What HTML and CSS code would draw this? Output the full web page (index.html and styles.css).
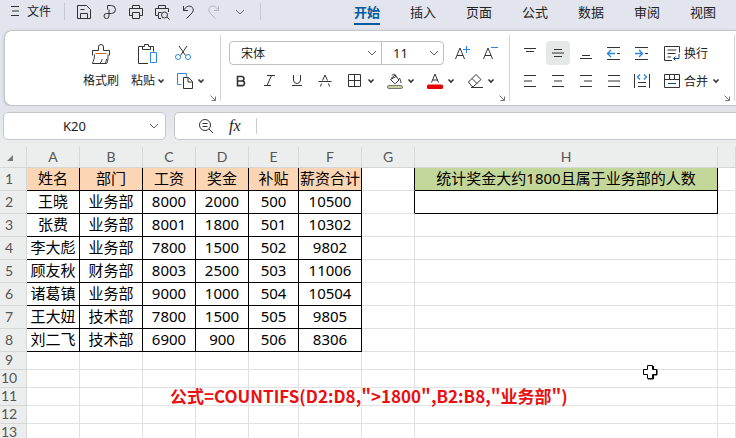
FILE: index.html
```
<!doctype html>
<html lang="zh-CN">
<head>
  <meta charset="utf-8">
  <title>COUNTIFS</title>
  <link rel="stylesheet" href="styles.css">
</head>
<body>
  <!-- Shared icons -->
  <svg class="defs" width="0" height="0">
    <symbol id="caret" viewBox="0 0 8 8"><path d="M1.5 2.5 4 5l2.500-2.500" stroke-width="1.600"/></symbol>
    <symbol id="chevron" viewBox="0 0 10 8"><path d="M1 2l4 4 4-4"/></symbol>
    <symbol id="corner" viewBox="0 0 6 6"><path d="M.5.5l5 5M5.500 1.500v4h-4"/></symbol>
  </svg>

  <header class="topbar">
    <button class="file"><svg width="8" height="12" viewBox="0 0 8 12"><path d="M0 1.500h8M1 6h7M0 10.500h8"/></svg>文件</button>
    <div class="quick">
      <button aria-label="保存"><svg viewBox="0 0 16 16"><path d="M1.500 1.500h9l4 4v9h-13zM4.500 14.500V9.500h7v5M4.500 5.500h4"/></svg></button>
      <button aria-label="输出"><svg viewBox="0 0 16 16"><path d="M5.500 5.500v-4h4a4 4 0 0 1 0 8h-5a2.500 2.500 0 1 0 2.500 2.500V5.500"/></svg></button>
      <button aria-label="打印"><svg viewBox="0 0 16 16"><path d="M4.500 4.500v-3h7v3M4.500 11.500h-3v-7h13v7h-3M4.500 8.500h7v6h-7z"/></svg></button>
      <button aria-label="预览"><svg viewBox="0 0 16 16"><path d="M4.500 4.500v-3h7v3M7 14.500H4.500v-3h-3v-7h13V8M4.500 11V8.500h3"/><circle cx="10.500" cy="11" r="3"/><path d="M13 13l2.500 2.500"/></svg></button>
      <button aria-label="撤销"><svg viewBox="0 0 16 16"><path d="M3.500 2v4.500H8M3.500 6.500C6 2.500 8.500 1.500 11 2.500s3 4 1 6.500l-5.500 5.500"/></svg></button>
      <button aria-label="恢复" disabled><svg viewBox="0 0 16 16"><path d="M12.500 2v4.500H8M12.500 6.500C10 2.500 7.500 1.500 5 2.500s-3 4-1 6.500l5.500 5.500"/></svg></button>
      <button aria-label="更多"><svg class="chev"><use href="#chevron"/></svg></button>
    </div>
    <nav class="tabs">
      <a href="#" class="active">开始</a>
      <a href="#">插入</a>
      <a href="#">页面</a>
      <a href="#">公式</a>
      <a href="#">数据</a>
      <a href="#">审阅</a>
      <a href="#">视图</a>
    </nav>
  </header>

  <section class="ribbon">
    <div class="group clipboard">
      <button class="big"><svg viewBox="0 0 20 20"><path d="M1.500 11.500v-5h6V3a2.500 2.500 0 0 1 5 0v3.500h6v5M3.500 10.500c0 4-1 6-2 9h14c1.500-2 1.500-5 1.500-9M9 19c1.500-1 2-2.500 2-4M14 19c1-1 1.500-2.500 1.500-4"/><path class="orange" d="M4.500 9.500h11"/></svg><span>格式刷</span></button>
      <button class="big"><svg viewBox="0 0 20 20"><path d="M10 19.500H.5v-17h4M12.500 2.500h3v5M4.500 5.500v-3h2v-2h4v2h2v3z"/><path class="blue" d="M12.500 8.500h6v10h-6z"/></svg><span>粘贴<svg class="caret"><use href="#caret"/></svg></span></button>
      <div class="stack">
        <button aria-label="剪切"><svg viewBox="0 0 16 16"><path d="M4 1l6.500 9.500M12 1 5.500 10.500"/><circle class="blue" cx="3" cy="12" r="2.500"/><circle class="blue" cx="13" cy="12" r="2.500"/></svg></button>
        <button class="copy" aria-label="复制"><svg viewBox="0 0 16 16"><path class="blue" d="M4.500 11.500h-4v-11h9v3"/><path d="M6.500 4.500h5l4 4v7h-9zM11 5v4h4"/></svg><svg class="caret"><use href="#caret"/></svg></button>
      </div>
      <button class="launcher" aria-label="剪贴板"><svg><use href="#corner"/></svg></button>
    </div>

    <div class="group font">
      <div class="row">
        <div class="combo">
          <label class="face"><select aria-label="字体"><option>宋体</option></select><svg class="chev"><use href="#chevron"/></svg></label>
          <label class="size"><select aria-label="字号"><option>11</option></select><svg class="chev"><use href="#chevron"/></svg></label>
        </div>
        <button aria-label="增大字号"><svg viewBox="0 0 16 16"><path d="M1.500 14 6 3l4.500 11M3 10.500h6"/><path class="blue" d="M9 4.500h7M12.500 1v7"/></svg></button>
        <button aria-label="减小字号"><svg viewBox="0 0 16 16"><path d="M1.500 14 6 3l4.500 11M3 10.500h6"/><path class="blue" d="M9 2.500h7"/></svg></button>
      </div>
      <div class="row tools">
        <button aria-label="加粗"><svg viewBox="0 0 16 16"><path stroke-width="1.600" d="M4.500 3.500h4.200a2.200 2.200 0 0 1 0 4.500H4.500zM4.500 8h4.700a2.300 2.300 0 0 1 0 4.600H4.500z"/></svg></button>
        <button aria-label="倾斜"><svg viewBox="0 0 16 16"><path d="M6 2.500h8M3 12.500h7M10.500 2.500l-4.500 10"/></svg></button>
        <button aria-label="下划线"><svg viewBox="0 0 16 16"><path d="M4.500 2v5a3.500 3.500 0 0 0 7 0V2M3 12.500h10"/></svg></button>
        <button aria-label="删除线"><svg viewBox="0 0 16 16"><path d="M5.500 7.500 8 2l2.500 5.500M1.500 8.500h13M4.500 10.500l-1 3M11.500 10.500l1 3"/></svg></button>
        <button class="wide" aria-label="边框"><svg viewBox="0 0 16 16"><path d="M1.500 1.500h12v12h-12zM7.500 1.500v12M1.500 7.500h12"/></svg><svg class="caret"><use href="#caret"/></svg></button>
        <button class="wide" aria-label="填充颜色"><svg viewBox="0 0 16 16"><path d="M5 2.500c1-2 4-1.500 4 1L3.500 6.500l4 4h1L12 7 8 2 4 5.500M12.500 5c.5 1.500 1.500 3 1.500 5"/><rect x=".5" y="12.500" width="15" height="3" rx="1.500" fill="#c5d69b" stroke="#777"/></svg><svg class="caret"><use href="#caret"/></svg></button>
        <button class="wide" aria-label="字体颜色"><svg viewBox="0 0 16 16"><path d="M4.500 9.500 8 1l3.500 8.500M5.500 7h5"/><rect y="11.500" width="16" height="4.500" rx="1.500" fill="#e80000" stroke="none"/></svg><svg class="caret"><use href="#caret"/></svg></button>
        <button class="wide" aria-label="清除"><svg viewBox="0 0 16 16"><path d="M1.500 9 9 1.500 14 6.500 6.500 13.500H5zM5 5.500l5 5M4 14.500h12"/></svg><svg class="caret"><use href="#caret"/></svg></button>
      </div>
      <button class="launcher" aria-label="字体设置"><svg><use href="#corner"/></svg></button>
    </div>

    <div class="group align">
      <div class="row">
        <button aria-label="顶端对齐"><svg viewBox="0 0 16 16"><path d="M2 3.500h12M4 6.500h8"/></svg></button>
        <button class="on" aria-label="垂直居中"><svg viewBox="0 0 16 16"><path d="M4 4.500h8M2 8h12M4 11.500h8"/></svg></button>
        <button aria-label="底端对齐"><svg viewBox="0 0 16 16"><path d="M4 10.500h8M2 13.500h12"/></svg></button>
        <button aria-label="减少缩进"><svg viewBox="0 0 16 16"><path d="M1 2.500h13M11 8.500h3M1 14.500h13"/><path class="blue" stroke-width="1.400" d="M9 8.500H2M5 5 1.500 8.500 5 12"/></svg></button>
        <button aria-label="增加缩进"><svg viewBox="0 0 16 16"><path d="M1 2.500h13M11 8.500h3M1 14.500h13"/><path class="blue" stroke-width="1.400" d="M1 8.500h7M5 5l3.500 3.500L5 12"/></svg></button>
        <button class="text"><svg viewBox="0 0 16 16"><path d="M8 15.500H.5V1.500h15v6M3.500 5h9M3.500 8.500h8M3.500 12H7"/><path class="navy" d="M15 9v4.500H9.500M11.500 11.500l-2 2 2 2"/></svg>换行</button>
      </div>
      <div class="row">
        <button aria-label="左对齐"><svg viewBox="0 0 16 16"><path d="M2 2.500h12M2 8h8M2 13.500h12"/></svg></button>
        <button aria-label="水平居中"><svg viewBox="0 0 16 16"><path d="M2 2.500h12M4 8h8M2 13.500h12"/></svg></button>
        <button aria-label="右对齐"><svg viewBox="0 0 16 16"><path d="M2 2.500h12M6 8h8M2 13.500h12"/></svg></button>
        <button aria-label="两端对齐"><svg viewBox="0 0 16 16"><path d="M2 2.500h12M2 8h12M2 13.500h12"/></svg></button>
        <button aria-label="分散对齐"><svg viewBox="0 0 16 16"><path d="M.5 1v14M15.500 1v14M4 9.500h8M4 13.500h8"/><path class="blue" stroke-width="1.400" d="M6 1.500 3.500 4 6 6.500M10 1.500 12.500 4 10 6.500"/></svg></button>
        <button class="text"><svg viewBox="0 0 16 16"><path d="M.5 1.500h15v13H.5zM.5 6.500h15M5.500 1.500v5M10.500 1.500v5"/><path class="navy" d="M4 10.500h8"/></svg>合并<svg class="caret"><use href="#caret"/></svg></button>
      </div>
      <button class="launcher" aria-label="对齐设置"><svg><use href="#corner"/></svg></button>
    </div>
  </section>

  <div class="formula-bar">
    <label class="name-box"><input type="text" value="K20" aria-label="名称框"><svg class="chev"><use href="#chevron"/></svg></label>
    <div class="formula">
      <svg width="16" height="16" viewBox="0 0 16 16"><circle cx="7" cy="7" r="5.500"/><path d="M4.500 5.500h5M4.500 8.500h5M11 11l4 4"/></svg>
      <span class="fx">fx</span>
      <input type="text" aria-label="编辑栏">
    </div>
  </div>

  <main class="sheet">
    <table>
      <colgroup>
        <col class="c-num"><col class="c-m"><col class="c-l"><col class="c-m"><col class="c-m"><col class="c-s"><col class="c-l"><col class="c-m"><col class="c-xl"><col>
      </colgroup>
      <thead>
        <tr><th class="all"><svg width="8" height="8" viewBox="0 0 8 8"><path d="M7 1v6H1z"/></svg></th><th>A</th><th>B</th><th>C</th><th>D</th><th>E</th><th>F</th><th>G</th><th>H</th><th></th></tr>
      </thead>
      <tbody class="data">
        <tr class="head"><th>1</th><td>姓名</td><td>部门</td><td>工资</td><td>奖金</td><td>补贴</td><td>薪资合计</td><td class="edge"></td><td class="ask">统计奖金大约1800且属于业务部的人数</td><td class="none"></td></tr>
        <tr><th>2</th><td>王晓</td><td>业务部</td><td>8000</td><td>2000</td><td>500</td><td>10500</td><td class="edge"></td><td></td><td class="none"></td></tr>
        <tr><th>3</th><td>张费</td><td>业务部</td><td>8001</td><td>1800</td><td>501</td><td>10302</td><td class="none"></td><td class="none"></td><td class="none"></td></tr>
        <tr><th>4</th><td>李大彪</td><td>业务部</td><td>7800</td><td>1500</td><td>502</td><td>9802</td><td class="none"></td><td class="none"></td><td class="none"></td></tr>
        <tr><th>5</th><td>顾友秋</td><td>财务部</td><td>8003</td><td>2500</td><td>503</td><td>11006</td><td class="none"></td><td class="none"></td><td class="none"></td></tr>
        <tr><th>6</th><td>诸葛镇</td><td>业务部</td><td>9000</td><td>1000</td><td>504</td><td>10504</td><td class="none"></td><td class="none"></td><td class="none"></td></tr>
        <tr><th>7</th><td>王大妞</td><td>技术部</td><td>7800</td><td>1500</td><td>505</td><td>9805</td><td class="none"></td><td class="none"></td><td class="none"></td></tr>
        <tr><th>8</th><td>刘二飞</td><td>技术部</td><td>6900</td><td>900</td><td>506</td><td>8306</td><td class="none"></td><td class="none"></td><td class="none"></td></tr>
      </tbody>
      <tbody>
        <tr><th>9</th><td></td><td></td><td></td><td></td><td></td><td></td><td></td><td></td><td></td></tr>
        <tr><th>10</th><td></td><td></td><td></td><td></td><td></td><td></td><td></td><td></td><td></td></tr>
        <tr><th>11</th><td></td><td></td><td></td><td></td><td></td><td></td><td></td><td></td><td></td></tr>
        <tr><th>12</th><td></td><td></td><td></td><td></td><td></td><td></td><td></td><td></td><td></td></tr>
        <tr><th>13</th><td></td><td></td><td></td><td></td><td></td><td></td><td></td><td></td><td></td></tr>
      </tbody>
    </table>
    <p class="note">公式=COUNTIFS(D2:D8,"&gt;1800",B2:B8,"业务部")</p>
    <svg class="pointer" width="16" height="16" viewBox="0 0 16 16"><path d="M5.500 1.500h5v4h4v5h-4v4h-5v-4h-4v-5h4z"/><path class="shade" d="M11.500 2v3.500M15 5.500v5.500h-3.500v4H6"/></svg>
  </main>
</body>
</html>
```

FILE: styles.css
```
* {
  box-sizing: border-box;
  margin: 0;
  padding: 0;
}

body {
  display: flex;
  flex-direction: column;
  height: 100vh;
  overflow: hidden;
  font-family: "Noto Sans", "Noto Sans CJK SC", sans-serif;
  font-size: 12px;
  color: #222;
  background: #e2e5ed;
}

svg {
  flex: none;
  fill: none;
  stroke: #333;
}

.blue { stroke: #2b87dc }
.navy { stroke: #0b4a86 }
.orange { stroke: #c46a10 }

.defs { position: absolute }

button {
  display: flex;
  align-items: center;
  justify-content: center;
  font: inherit;
  color: inherit;
  background: none;
  border: 0;
}

button svg {
  width: 16px;
  height: 16px;
}

input,
select {
  font: inherit;
  color: inherit;
  background: none;
  border: 0;
  outline: none;
  appearance: none;
}

button .caret,
.caret {
  width: 8px;
  height: 8px;
}

button .chev,
.chev {
  width: 10px;
  height: 8px;
  stroke: #666;
}

/* Top bar */
.topbar {
  display: flex;
  flex: none;
  height: 30px;
}

.file {
  gap: 8px;
  width: 64px;
  height: 22px;
  padding-right: 2px;
}

.file svg {
  width: 8px;
  height: 12px;
}

.quick {
  display: flex;
  width: 197px;
  height: 17px;
  margin-top: 3px;
  padding-left: 6px;
  border: solid #c6c9d0;
  border-width: 0 1px;
}

.quick button { width: 26px }
.quick button:disabled svg { stroke: #b5b8be }

.tabs {
  display: flex;
  margin-left: 78px;
}

.tabs a {
  display: flex;
  justify-content: center;
  width: 56px;
  font-size: 13px;
  line-height: 24px;
  color: #222;
  text-decoration: none;
}

.tabs .active {
  height: 25px;
  width: 26px;
  margin: 0 15px;
  font-weight: 700;
  color: #005a9e;
  border-bottom: 2px solid #005a9e;
}

/* Ribbon */
.ribbon {
  display: flex;
  flex: none;
  height: 76px;
  margin-left: 4px;
  padding: 4px 0;
  background: #fff;
  border: 1px solid #c2c6cb;
  border-right: 0;
  border-radius: 8px 0 0 8px;
  box-shadow: 0 1px 3px #b9bec6;
}

.group {
  position: relative;
  flex: none;
  padding: 6px 0 6px 8px;
  border-right: 1px solid #d5d5d5;
}

.clipboard {
  display: flex;
  width: 216px;
  padding-left: 74px;
}

.font { width: 289px }
.align { width: 225px }

.row {
  display: flex;
  height: 24px;
  margin-bottom: 4px;
}

.big {
  flex-direction: column;
  justify-content: flex-start;
  gap: 8px;
  width: 44px;
  padding-top: 3px;
  line-height: 18px;
}

.big + .big { width: 50px }

.big > svg {
  width: 20px;
  height: 20px;
}

.big span {
  display: flex;
  align-items: center;
  gap: 2px;
  white-space: nowrap;
}

.stack { padding-left: 2px }

.stack button {
  justify-content: flex-start;
  gap: 4px;
  height: 24px;
  margin-bottom: 4px;
}

.stack .copy { padding-left: 2px }

.launcher {
  position: absolute;
  right: 4px;
  bottom: 0;
}

.launcher svg {
  width: 6px;
  height: 6px;
  stroke: #777;
}

.combo {
  display: flex;
  flex: none;
  width: 215px;
  margin-right: 4px;
  font-size: 12px;
  border: 1px solid #bfbfbf;
  border-radius: 4px;
}

.combo label {
  display: flex;
  align-items: center;
  padding-right: 4px;
}

.combo select {
  flex: 1;
  min-width: 0;
  padding-left: 11px;
}

.face {
  flex: 1;
  border-right: 1px solid #bfbfbf;
}

.size {
  width: 61px;
  font-size: 13px;
}

.row button {
  flex: none;
  width: 28px;
}

.tools { margin-left: -2px }

.tools .wide {
  justify-content: flex-start;
  gap: 4px;
  width: 40px;
  padding-left: 8px;
}

.align .row { margin-left: -2px }

.align .on {
  width: 24px;
  margin: 0 2px;
  background: #e6e8e7;
  border-radius: 4px;
}

.row .text {
  justify-content: flex-start;
  gap: 4px;
  width: 64px;
  padding-left: 8px;
  white-space: nowrap;
}

/* Name box and formula input */
.formula-bar {
  display: flex;
  flex: none;
  gap: 8px;
  padding: 6px 0 7px 3px;
  background: linear-gradient(#dfe3ea, #eceeed);
}

.name-box,
.formula {
  display: flex;
  align-items: center;
  height: 28px;
  background: #fff;
  border: 1px solid #c3c6ca;
  border-radius: 5px;
}

.name-box {
  width: 163px;
  padding-right: 6px;
  font-size: 13px;
}

.name-box input {
  flex: 1;
  min-width: 0;
  padding-right: 4px;
  text-align: center;
}

.formula {
  flex: 1;
  gap: 15px;
  padding-left: 23px;
  border-right: 0;
  border-radius: 5px 0 0 5px;
}

.fx {
  font: italic 16px "Liberation Serif", serif;
}

.formula input {
  flex: 1;
  height: 16px;
  border-left: 1px solid #ccc;
}

/* Grid */
.sheet {
  position: relative;
  flex: 1;
  overflow: hidden;
  background: #fff;
}

table {
  width: 100%;
  table-layout: fixed;
  border-spacing: 0;
}

.c-num { width: 27px }
.c-s { width: 50px }
.c-m { width: 53px }
.c-l { width: 63px }
.c-xl { width: 303px }

th,
td {
  height: 18px;
  line-height: 17px;
  text-align: center;
  white-space: nowrap;
  border: solid #e1e1e1;
  border-width: 0 1px 1px 0;
}

th {
  padding-bottom: 2px;
  font: 14px/15px Lato, sans-serif;
  color: #555;
  background: #eceeed;
  border-color: #d6d8d7;
}

thead th { height: 21px }
tbody th { padding-right: 8px }

.all svg {
  fill: #777;
  stroke: none;
  margin-right: 7px;
}

.data th { height: 23px }

.data td {
  height: 23px;
  padding-bottom: 2px;
  font-size: 15px;
  line-height: 20px;
  color: #000;
  border-color: #000;
}

.head td { background: #fcd5b4 }
.head .ask { background: #c4d79b }

.data .none,
.data .edge {
  background: #fff;
  border-color: #e1e1e1;
}

.data .edge { border-right-color: #000 }

.note {
  position: absolute;
  left: 170px;
  top: 237px;
  font-family: "Noto Sans CJK SC", sans-serif;
  font-size: 17px;
  font-weight: 700;
  line-height: 24px;
  color: #e81010;
  white-space: nowrap;
  text-shadow: 0 0 2px #fff;
}

.pointer {
  position: absolute;
  left: 642px;
  top: 217px;
  fill: #fff;
  stroke: #000;
}

.shade { fill: none }
```
